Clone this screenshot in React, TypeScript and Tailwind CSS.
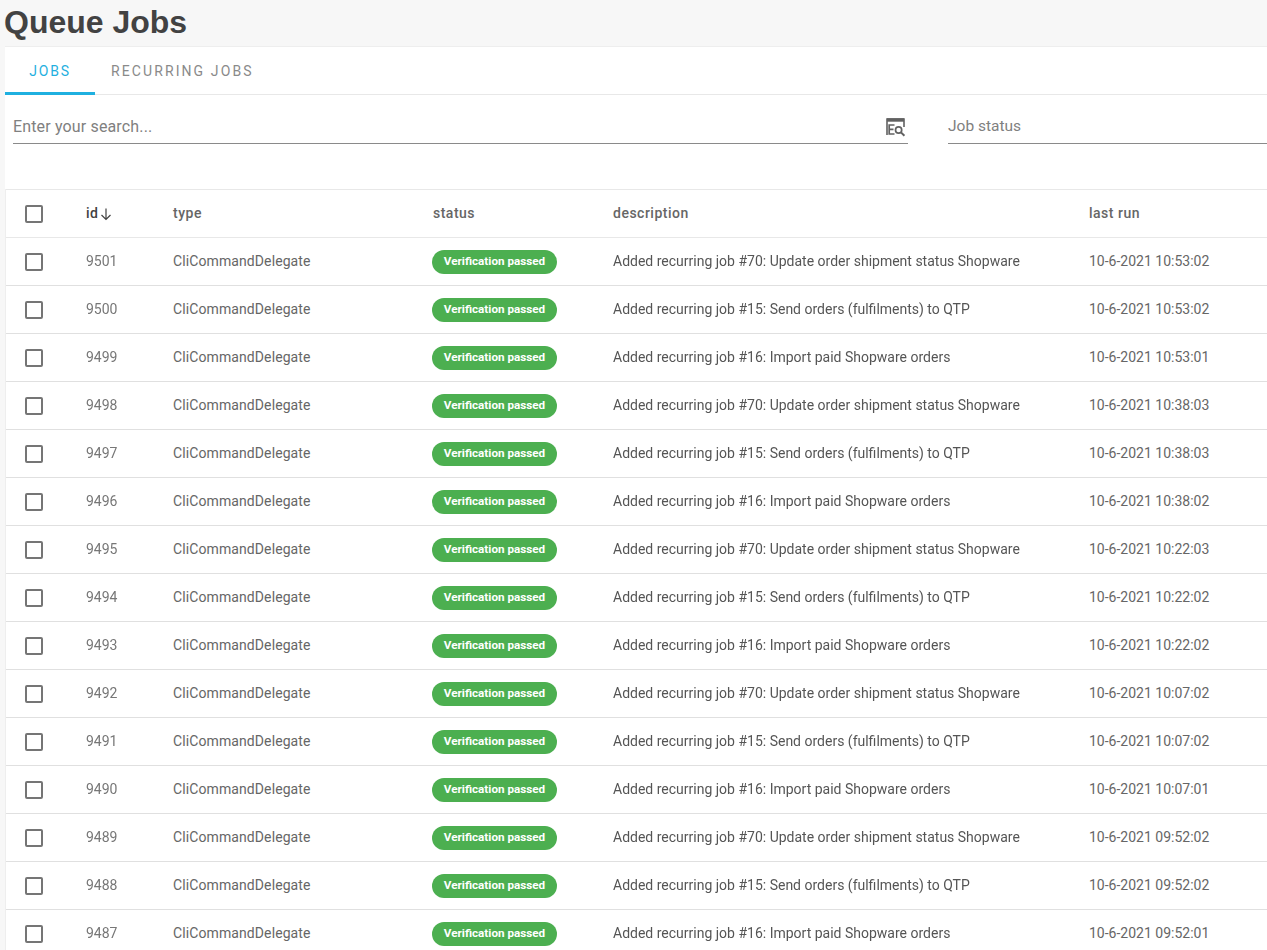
const rows = [
  ["9501", 0, "10-6-2021 10:53:02"],
  ["9500", 1, "10-6-2021 10:53:02"],
  ["9499", 2, "10-6-2021 10:53:01"],
  ["9498", 0, "10-6-2021 10:38:03"],
  ["9497", 1, "10-6-2021 10:38:03"],
  ["9496", 2, "10-6-2021 10:38:02"],
  ["9495", 0, "10-6-2021 10:22:03"],
  ["9494", 1, "10-6-2021 10:22:02"],
  ["9493", 2, "10-6-2021 10:22:02"],
  ["9492", 0, "10-6-2021 10:07:02"],
  ["9491", 1, "10-6-2021 10:07:02"],
  ["9490", 2, "10-6-2021 10:07:01"],
  ["9489", 0, "10-6-2021 09:52:02"],
  ["9488", 1, "10-6-2021 09:52:02"],
  ["9487", 2, "10-6-2021 09:52:01"],
] as const

const descriptions = [
  "Added recurring job #70: Update order shipment status Shopware",
  "Added recurring job #15: Send orders (fulfilments) to QTP",
  "Added recurring job #16: Import paid Shopware orders",
]

function Checkbox() {
  return <div className="h-[18px] w-[18px] rounded-[2px] border-2 border-[#757575] bg-white" />
}

function SearchIcon() {
  return (
    <svg width="20" height="20" viewBox="0 0 20 20" fill="none" stroke="#616161" strokeWidth="1.6">
      <path d="M1 18V2h17v8" />
      <path d="M1 3h17" strokeWidth="3.4" />
      <path d="M8.5 8H3.2v9H8.5M3.2 12.3H7.5" strokeWidth="1.7" />
      <circle cx="12.6" cy="13" r="3.1" strokeWidth="1.7" />
      <path d="M15 15.4l3.4 3.4" strokeWidth="2" />
    </svg>
  )
}

export default function App() {
  return (
    <div className="h-[950px] overflow-hidden bg-[#f7f7f7] font-['Roboto',sans-serif] text-[#666666]">
      <h1 className="h-[46px] pl-[4px] pt-[2px] font-['Liberation_Sans',sans-serif] text-[32px] font-bold leading-[40px] text-[#424242]">
        Queue Jobs
      </h1>

      <div className="ml-[5px] border-t border-[#eeeeee] bg-white">
        {/* Tabs */}
        <div className="flex h-[48px] border-b border-[#e8e8e8]">
          <div className="flex h-[48px] w-[90px] items-center justify-center border-b-[3px] border-[#1fb0e0] pt-[3px] text-[14px] tracking-[1.8px] text-[#1fb0e0]">
            JOBS
          </div>
          <div className="flex h-[48px] items-center pl-[16px] text-[14px] tracking-[2.1px] text-[#8a8a8a]">
            RECURRING JOBS
          </div>
        </div>

        {/* Filters */}
        <div className="flex h-[94px] items-start pl-[8px]">
          <div className="mt-[16px] flex h-[33px] w-[895px] items-center justify-between border-b border-[#8a8a8a]">
            <span className="text-[16px] tracking-[0.15px] text-[#808080]">Enter your search...</span>
            <div className="mr-[2px]">
              <SearchIcon />
            </div>
          </div>
          <div className="ml-[40px] mt-[16px] flex h-[33px] flex-1 items-center border-b border-[#8a8a8a] text-[15.5px] text-[#808080]">
            Job status
          </div>
        </div>

        {/* Table */}
        <div className="border-l border-[#eeeeee]">
          <div className="grid h-[49px] grid-cols-[80px_87px_260px_180px_476px_1fr] items-center border-y border-[#e8e8e8] text-[14px] font-medium tracking-[0.5px] text-[#666666]">
            <div className="pl-[19px]">
              <Checkbox />
            </div>
            <div className="flex items-center gap-[1px] text-[#424242]">
              id
              <svg width="14" height="14" viewBox="0 0 14 14" fill="none" stroke="#424242" strokeWidth="1.2">
                <path d="M7 1.5v11M2.5 8L7 12.5 11.5 8" />
              </svg>
            </div>
            <div>type</div>
            <div>status</div>
            <div>description</div>
            <div>last run</div>
          </div>

          {rows.map(([id, desc, lastRun]) => (
            <div
              key={id}
              className="grid h-[48px] grid-cols-[80px_87px_260px_180px_476px_1fr] items-center border-b border-[#e0e0e0] text-[14px] text-[#666666]"
            >
              <div className="pl-[19px]">
                <Checkbox />
              </div>
              <div className="text-[14px] text-[#777777] blur-[0.6px]">{id}</div>
              <div className="tracking-[0.1px]">CliCommandDelegate</div>
              <div className="-ml-[1px]">
                <span className="inline-flex h-[24px] w-[125px] items-center justify-center rounded-full bg-[#4caf50] pt-[1px] text-[11.7px] font-bold text-white">
                  Verification passed
                </span>
              </div>
              <div className="whitespace-nowrap text-[14px] text-[#555555] blur-[0.6px]">{descriptions[desc]}</div>
              <div className="whitespace-nowrap">{lastRun}</div>
            </div>
          ))}
        </div>
      </div>
    </div>
  )
}
